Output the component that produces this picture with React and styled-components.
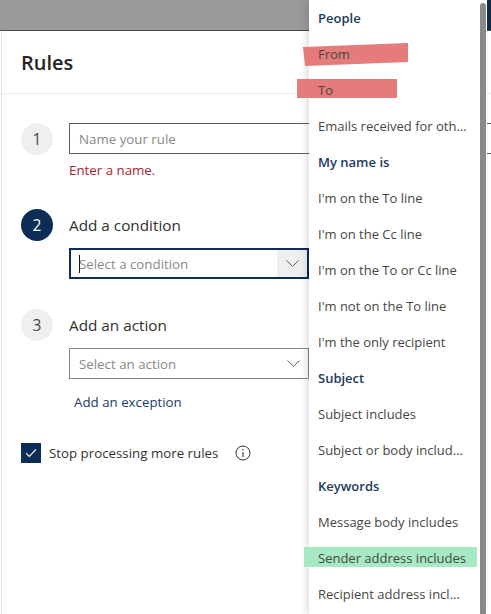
import React from 'react'
import styled, { createGlobalStyle } from 'styled-components'

const GlobalStyle = createGlobalStyle`
  html, body {
    margin: 0;
    padding: 0;
    background: #fff;
    overflow: hidden;
  }
  body {
    font-family: "Open Sans", "Noto Sans", sans-serif;
  }
`

const Page = styled.div`
  position: relative;
  width: 491px;
  height: 614px;
  overflow: hidden;
  display: flex;
  flex-direction: column;
`

const Backdrop = styled.div`
  flex: none;
  height: 30px;
  background: #9a9a9a;
  border-bottom: 1px solid #4a4a4a;
  display: flex;
  justify-content: flex-end;
`

const BackdropEdge = styled.div`
  width: 6px;
  background: #0e2a4c;
`

const Panel = styled.section`
  flex: 1;
  margin-left: 1px;
  background: #fff;
  border-left: 1px solid #e6e6e6;
`

const Header = styled.header`
  height: 62px;
  display: flex;
  align-items: center;
  padding-left: 19px;
  border-bottom: 1px solid #edebe9;
`

const Title = styled.h1`
  margin: 0;
  font-size: 20px;
  font-weight: 600;
  color: #252423;
`

const Body = styled.div`
  padding: 29px 0 0 19px;
`

const Step = styled.div`
  display: grid;
  grid-template-columns: 32px 1fr;
  column-gap: 16px;
  margin-top: ${p => p.$gap || 0}px;
`

const Badge = styled.div`
  width: 32px;
  height: 32px;
  border-radius: 50%;
  display: flex;
  align-items: center;
  justify-content: center;
  font-size: 15.5px;
  background: ${p => (p.$active ? '#0c2d55' : '#efefef')};
  color: ${p => (p.$active ? '#fff' : '#444')};
`

const Content = styled.div`
  display: flex;
  flex-direction: column;
  align-items: flex-start;
`

const StepTitle = styled.div`
  height: 32px;
  line-height: 32px;
  font-size: 15.3px;
  color: #323130;
`

const TextInput = styled.div`
  box-sizing: border-box;
  width: 460px;
  height: 31px;
  border: 1px solid #605e5c;
  display: flex;
  align-items: center;
  padding-left: 9px;
  font-size: 13.3px;
  color: #8a8886;
`

const ErrorText = styled.div`
  margin-top: 6px;
  line-height: 20px;
  font-size: 13.3px;
  color: #a4262c;
`

const Select = styled.div`
  box-sizing: border-box;
  width: 240px;
  height: 31px;
  margin-top: 7px;
  display: flex;
  align-items: stretch;
  border: ${p => (p.$focused ? '2px solid #0c2d55' : '1px solid #8a8886')};
  background: #fff;
`

const SelectText = styled.span`
  flex: 1;
  display: flex;
  align-items: center;
  padding-left: ${p => (p.$focused ? '8px' : '9px')};
  font-size: 13.3px;
  color: #8a8886;
`

const Cursor = styled.i`
  width: 1px;
  height: 18px;
  margin-right: -1px;
  background: #111;
`

const ChevronBox = styled.span`
  width: 30px;
  display: flex;
  align-items: center;
  justify-content: center;
  background: ${p => (p.$focused ? '#efefef' : 'transparent')};
`

const LinkText = styled.a`
  margin: 13px 0 0 5px;
  line-height: 20px;
  font-size: 13.3px;
  color: #1b3d66;
  text-decoration: none;
`

const CheckRow = styled.label`
  margin-top: 31px;
  display: flex;
  align-items: center;
  gap: 8px;
  font-size: 13.3px;
  color: #323130;
`

const Box = styled.span`
  width: 20px;
  height: 20px;
  background: #0c2d55;
  display: flex;
  align-items: center;
  justify-content: center;
`

const InfoIcon = styled.span`
  display: flex;
  margin-left: 9px;
`

const Menu = styled.div`
  position: absolute;
  top: 0;
  left: 309px;
  width: 178px;
  height: 614px;
  display: flex;
  background: #fff;
  box-shadow: -3px 0 7px rgba(0, 0, 0, 0.12);
`

const List = styled.div`
  width: 171px;
`

const Group = styled.div`
  height: 36px;
  display: flex;
  align-items: center;
  padding-left: 9px;
  font-size: 13px;
  font-weight: 600;
  color: #1a3a5f;
`

const marks = {
  from: `left: -6px; width: 105px; top: 7px; height: 23px; background: #e57b7b;
    clip-path: polygon(0 17%, 100% 0, 100% 83%, 2px 100%);`,
  to: `left: -12px; width: 100px; top: 7px; height: 19px; background: #e57b7b;`,
  sender: `left: -5px; width: 173px; top: 7px; height: 20px; background: #a6e9c2;`,
}

const Option = styled.div`
  position: relative;
  height: 36px;
  display: flex;
  align-items: center;
  padding-left: 9px;
  font-size: 13px;
  color: #484644;
  white-space: nowrap;

  &::before {
    content: '';
    position: absolute;
    display: ${p => (p.$mark ? 'block' : 'none')};
    ${p => marks[p.$mark] || ''}
  }
`

const OptionLabel = styled.span`
  position: relative;
`

const Track = styled.div`
  width: 7px;
  padding-top: 3px;
  display: flex;
  justify-content: flex-start;
`

const Thumb = styled.div`
  width: 6px;
  height: 100%;
  border-radius: 3px 3px 0 0;
  background: #8a8a8a;
`

const Chevron = () => (
  <svg width="13" height="7" viewBox="0 0 13 7" fill="none">
    <path d="M0.5 0.5 L6.5 6.3 L12.5 0.5" stroke="#605e5c" strokeWidth="1" />
  </svg>
)

const options = [
  { group: 'People' },
  { label: 'From', mark: 'from' },
  { label: 'To', mark: 'to' },
  { label: 'Emails received for oth…' },
  { group: 'My name is' },
  { label: "I'm on the To line" },
  { label: "I'm on the Cc line" },
  { label: "I'm on the To or Cc line" },
  { label: "I'm not on the To line" },
  { label: "I'm the only recipient" },
  { group: 'Subject' },
  { label: 'Subject includes' },
  { label: 'Subject or body includ…' },
  { group: 'Keywords' },
  { label: 'Message body includes' },
  { label: 'Sender address includes', mark: 'sender' },
  { label: 'Recipient address incl…' },
]

export default function App() {
  return (
    <>
      <GlobalStyle />
      <Page>
        <Backdrop>
          <BackdropEdge />
        </Backdrop>
        <Panel>
          <Header>
            <Title>Rules</Title>
          </Header>
          <Body>
            <Step>
              <Badge>1</Badge>
              <Content>
                <TextInput>Name your rule</TextInput>
                <ErrorText>Enter a name.</ErrorText>
              </Content>
            </Step>
            <Step $gap={29}>
              <Badge $active>2</Badge>
              <Content>
                <StepTitle>Add a condition</StepTitle>
                <Select $focused>
                  <SelectText $focused>
                    <Cursor />
                    Select a condition
                  </SelectText>
                  <ChevronBox $focused>
                    <Chevron />
                  </ChevronBox>
                </Select>
              </Content>
            </Step>
            <Step $gap={30}>
              <Badge>3</Badge>
              <Content>
                <StepTitle>Add an action</StepTitle>
                <Select>
                  <SelectText>Select an action</SelectText>
                  <ChevronBox>
                    <Chevron />
                  </ChevronBox>
                </Select>
                <LinkText href="#">Add an exception</LinkText>
              </Content>
            </Step>
            <CheckRow>
              <Box>
                <svg width="12" height="10" viewBox="0 0 12 10" fill="none">
                  <path d="M1 5.2 L4.3 8.4 L11 1.4" stroke="#fff" strokeWidth="1.1" />
                </svg>
              </Box>
              Stop processing more rules
              <InfoIcon>
                <svg width="16" height="16" viewBox="0 0 16 16" fill="none">
                  <circle cx="8" cy="8" r="7" stroke="#323130" strokeWidth="1" />
                  <path d="M8 7 V12" stroke="#323130" strokeWidth="1.1" />
                  <circle cx="8" cy="4.8" r="0.8" fill="#323130" />
                </svg>
              </InfoIcon>
            </CheckRow>
          </Body>
        </Panel>
        <Menu>
          <List>
            {options.map((o, i) =>
              o.group ? (
                <Group key={i}>{o.group}</Group>
              ) : (
                <Option key={i} $mark={o.mark}>
                  <OptionLabel>{o.label}</OptionLabel>
                </Option>
              )
            )}
          </List>
          <Track>
            <Thumb />
          </Track>
        </Menu>
      </Page>
    </>
  )
}
